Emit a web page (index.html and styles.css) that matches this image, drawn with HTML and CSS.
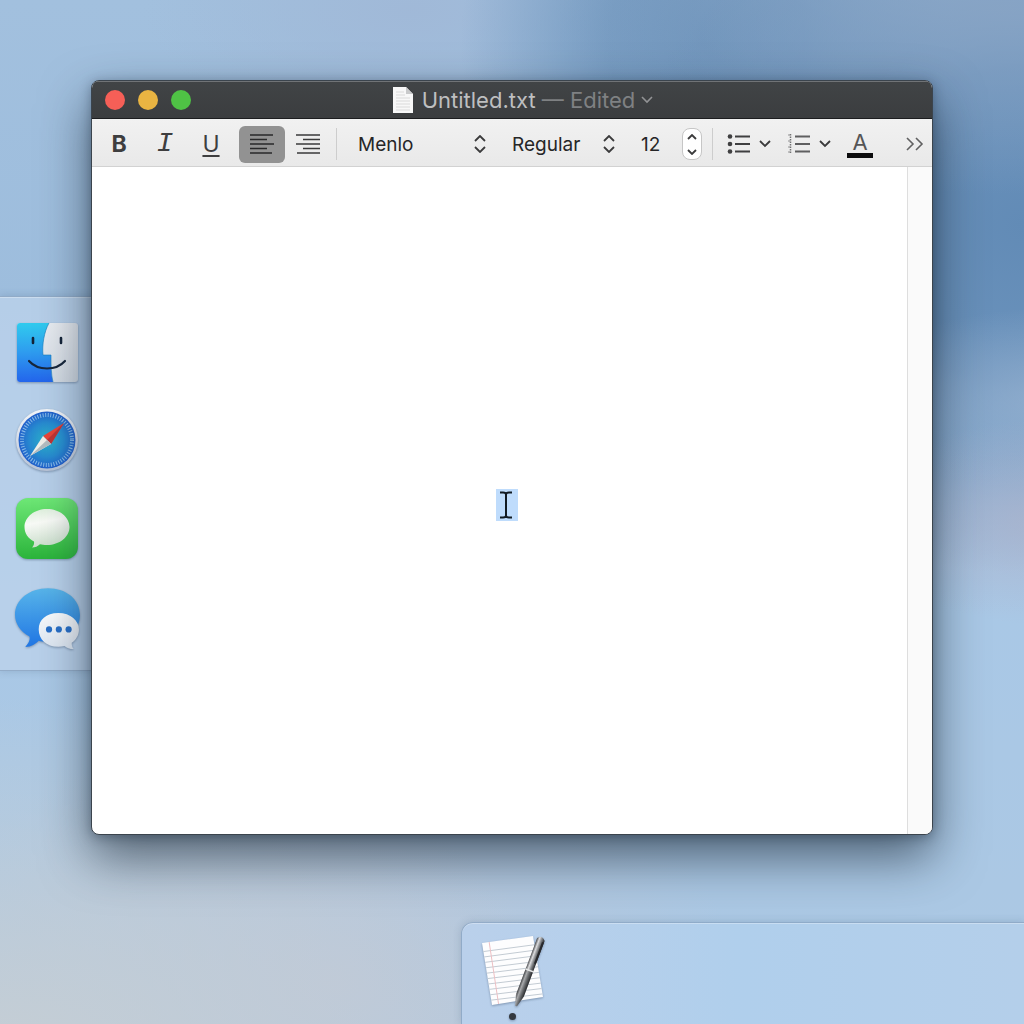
FILE: index.html
```html
<!DOCTYPE html>
<html lang="en">
<head>
<meta charset="utf-8">
<meta name="viewport" content="width=device-width, initial-scale=1">
<title>Untitled.txt</title>
<link rel="stylesheet" href="styles.css">
</head>
<body>
<main class="desktop">
  <nav class="dock dock-side" aria-label="Applications">
    <button class="app" type="button" aria-label="Finder">
      <svg viewBox="0 0 64 64" width="64" height="64">
        <defs>
          <linearGradient id="finder-blue" x1="0" y1="0" x2="0" y2="1"><stop offset="0" stop-color="#30cbee"/><stop offset=".5" stop-color="#2e9bef"/><stop offset="1" stop-color="#2365ec"/></linearGradient>
          <linearGradient id="finder-white" x1="0" y1="0" x2="1" y2="1"><stop offset="0" stop-color="#f3f4f7"/><stop offset="1" stop-color="#ccd5df"/></linearGradient>
        </defs>
        <rect x="2" y="3" width="61" height="59" rx="3" fill="url(#finder-white)"/>
        <path d="M34 3H5a3 3 0 0 0-3 3v53a3 3 0 0 0 3 3h33c-2-8-2-15-2-27h-8C27 25 29 12 34 3z" fill="url(#finder-blue)"/>
        <path d="M34 3C29 12 27 25 28 35h8c0 10 0 19 2 27" fill="none" stroke="#167bb9" stroke-width="1" opacity=".6"/>
        <path d="M18 18v5M46 18v5" stroke="#142338" stroke-width="2.600" stroke-linecap="round"/>
        <path d="M14 41c9 10 27 10 36 0" fill="none" stroke="#17263b" stroke-width="2.200" stroke-linecap="round"/>
      </svg>
    </button>
    <button class="app" type="button" aria-label="Safari">
      <svg viewBox="0 0 64 64" width="64" height="64">
        <defs>
          <radialGradient id="safari-blue"><stop offset="0" stop-color="#2bb3c9"/><stop offset=".6" stop-color="#278bd0"/><stop offset="1" stop-color="#2360cb"/></radialGradient>
          <linearGradient id="safari-ring" x1="0" y1="0" x2="0" y2="1"><stop offset="0" stop-color="#f2f5f9"/><stop offset="1" stop-color="#b9c4d6"/></linearGradient>
        </defs>
        <circle cx="32" cy="32" r="31" fill="url(#safari-ring)"/>
        <circle cx="32" cy="32" r="28.500" fill="url(#safari-blue)"/>
        <circle cx="32" cy="32" r="25" fill="none" stroke="#a4cff0" stroke-width="4" stroke-dasharray="1 1.618" opacity=".8"/>
        <path d="M49 15 28 28l8 8z" fill="#e84539"/>
        <path d="M49 15 32 32l4 4z" fill="#bd3536"/>
        <path d="M15 48 28 28l8 8z" fill="#f0efe9"/>
        <path d="M15 48 32 32l4 4z" fill="#b3bcc0"/>
      </svg>
    </button>
    <button class="app" type="button" aria-label="Messages">
      <svg viewBox="0 0 64 64" width="64" height="64">
        <defs>
          <linearGradient id="msg-green" x1="0" y1="0" x2="0" y2="1"><stop offset="0" stop-color="#6ee776"/><stop offset="1" stop-color="#2bb43b"/></linearGradient>
          <linearGradient id="msg-bubble" x1="0" y1="0" x2=".2" y2="1"><stop offset="0" stop-color="#d9eed8"/><stop offset=".4" stop-color="#f8faf6"/><stop offset="1" stop-color="#ccdfcd"/></linearGradient>
        </defs>
        <rect x="1" y="2" width="62" height="61" rx="12" fill="url(#msg-green)"/>
        <path d="M32 13c12.500 0 22.500 8 22.500 18S44.500 49 32 49c-3 0-5-.3-7-.8-2 2-5 3.300-8 3.300 1.500-1.500 2.500-4 2-6-6-3-9.500-8.500-9.500-14.500 0-10 10-18 22.500-18z" fill="url(#msg-bubble)"/>
      </svg>
    </button>
    <button class="app" type="button" aria-label="Chat">
      <svg viewBox="0 0 64 64" width="66" height="66">
        <defs>
          <linearGradient id="chat-blue" x1="0" y1="0" x2="0" y2="1"><stop offset="0" stop-color="#58b5ea"/><stop offset="1" stop-color="#2076e4"/></linearGradient>
          <linearGradient id="chat-white" x1="0" y1="0" x2="0" y2="1"><stop offset="0" stop-color="#fafbfd"/><stop offset="1" stop-color="#dbe5f1"/></linearGradient>
        </defs>
        <path d="M32 4c18 0 31 11 31 26S50 56 32 56c-4 0-7-.5-9-1-3 3-7 6-13 6 3-3 5-7 4-10C5 46 0 38 0 30 0 15 14 4 32 4z" fill="url(#chat-blue)"/>
        <path d="M42 28c12 0 20 7.500 20 16 0 6-3 10-7 13 0 2 0 4 2 6-4 0-7-1-9-3-2 .5-4 .8-6 .8-12 0-19-7.500-19-16.800S30 28 42 28z" fill="url(#chat-white)"/>
        <g fill="#286fc7"><circle cx="33" cy="44" r="3"/><circle cx="42.500" cy="44" r="3"/><circle cx="52" cy="44" r="3"/></g>
      </svg>
    </button>
  </nav>

  <nav class="dock dock-bottom" aria-label="Running applications">
    <button class="app running" type="button" aria-label="TextEdit">
      <svg viewBox="0 0 68 74" width="68" height="74">
        <defs>
          <linearGradient id="pen" x1="0" y1="0" x2="1" y2="0"><stop offset="0" stop-color="#4c4d50"/><stop offset=".3" stop-color="#dedee0"/><stop offset=".6" stop-color="#85878a"/><stop offset="1" stop-color="#252629"/></linearGradient>
          <clipPath id="sheet"><path d="M2 8 53 1 63 62 12 70z"/></clipPath>
        </defs>
        <path d="M2 8 53 1 63 62 12 70z" fill="#fdfdfe"/>
        <g clip-path="url(#sheet)" fill="none" stroke="#c3cbd3" stroke-width="1">
          <path d="M0 17l60-8M0 22.500l60-8M0 28l62-8M0 33.500l64-8M0 39l64-8M0 44.500l66-8M0 50l66-8M0 55.500l66-8M0 61l66-8M0 66.500l66-8"/>
          <path d="M9 6l10 66" stroke="#ecbfc3"/>
        </g>
        <g transform="translate(36 71) rotate(20.500)">
          <path d="M-1 0-4-12-4-36-4-71Q0-76 4-71L4-36 4-12 1 0z" fill="url(#pen)"/>
          <path d="M-4-38H4V-10L1 0h-2L-4-10z" fill="#303236" opacity=".3"/>
          <path d="M-4-38H4" stroke="#e4e5e6" stroke-width="1.500"/>
          <path d="M3-69V-46" stroke="#28292c" stroke-width="2"/>
        </g>
      </svg>
    </button>
  </nav>

  <section class="window" aria-label="Untitled.txt">
    <header class="titlebar">
      <div class="lights">
        <button class="light close" type="button" aria-label="Close"></button>
        <button class="light minimize" type="button" aria-label="Minimize"></button>
        <button class="light expand" type="button" aria-label="Zoom"></button>
      </div>
      <button class="title" type="button">
        <svg viewBox="0 0 20 26" width="20" height="26" aria-hidden="true">
          <path d="M0 0h13l7 7v19H0z" fill="#f8f8f8"/>
          <path d="M13 0v7h7z" fill="#c9cacb"/>
          <path d="M3 5h8M3 8h9M3 11h14M3 14h14M3 17h14M3 20h14M3 23h14" stroke="#dadada"/>
        </svg>
        <span class="title-name">Untitled.txt <span class="title-state">— Edited</span></span>
        <svg viewBox="0 0 14 10" width="14" height="10" aria-hidden="true"><path d="m2 2 5 5 5-5" fill="none" stroke="#929395" stroke-width="1.600"/></svg>
      </button>
    </header>

    <div class="toolbar" role="toolbar" aria-label="Formatting">
      <div class="group">
        <button class="tool bold" type="button" aria-label="Bold">B</button>
        <button class="tool italic" type="button" aria-label="Italic">I</button>
        <button class="tool underline" type="button" aria-label="Underline">U</button>
      </div>
      <div class="group">
        <button class="tool active" type="button" aria-label="Align left" aria-pressed="true">
          <svg viewBox="0 0 24 20" width="24" height="20"><path d="M0 1h23M0 5.500h17M0 10h24M0 14.500h17M0 19h22" stroke="#29292a" stroke-width="1.700"/></svg>
        </button>
        <button class="tool" type="button" aria-label="Align right">
          <svg viewBox="0 0 24 20" width="24" height="20"><path d="M0 1h24M7 5.500h17M0 10h24M7 14.500h17M1 19h23" stroke="#3a3a3b" stroke-width="1.700"/></svg>
        </button>
      </div>
      <span class="divider"></span>
      <label class="picker picker-font">
        <select aria-label="Font family"><option>Menlo</option></select>
        <svg viewBox="0 0 12 18" width="12" height="18"><path d="m1 6 5-5 5 5M1 12l5 5 5-5" fill="none" stroke="#3a3a3b" stroke-width="1.800"/></svg>
      </label>
      <label class="picker picker-style">
        <select aria-label="Typeface"><option>Regular</option></select>
        <svg viewBox="0 0 12 18" width="12" height="18"><path d="m1 6 5-5 5 5M1 12l5 5 5-5" fill="none" stroke="#3a3a3b" stroke-width="1.800"/></svg>
      </label>
      <input class="size" type="text" inputmode="numeric" value="12" aria-label="Font size">
      <div class="stepper">
        <button type="button" aria-label="Increase size"><svg viewBox="0 0 10 6" width="10" height="6"><path d="m1 5 4-4 4 4"/></svg></button>
        <button type="button" aria-label="Decrease size"><svg viewBox="0 0 10 6" width="10" height="6"><path d="m1 1 4 4 4-4"/></svg></button>
      </div>
      <span class="divider"></span>
      <div class="lists">
        <button class="menu" type="button" aria-label="Bulleted list">
          <svg viewBox="0 0 24 20" width="24" height="20"><g fill="#3f3f40"><circle cx="3" cy="2.500" r="2.300"/><circle cx="3" cy="10" r="2.300"/><circle cx="3" cy="17.500" r="2.300"/></g><path d="M8 2.500h15M8 10h15M8 17.500h15" stroke="#3f3f40" stroke-width="1.800"/></svg>
          <svg viewBox="0 0 12 8" width="12" height="8"><path class="chevron" d="m1 1 5 5 5-5"/></svg>
        </button>
        <button class="menu" type="button" aria-label="Numbered list">
          <svg viewBox="0 0 24 20" width="24" height="20"><path d="M3.500 0v20" stroke="#717172" stroke-width="1.500" stroke-dasharray="1.500 1"/><path d="M1 1h2M1 7h2M1 13h2M1 18h2" stroke="#929293"/><path d="M8 2.500h15M8 10h15M8 17.500h15" stroke="#5f5f60" stroke-width="1.800"/></svg>
          <svg viewBox="0 0 12 8" width="12" height="8"><path class="chevron" d="m1 1 5 5 5-5"/></svg>
        </button>
      </div>
      <button class="color" type="button" aria-label="Text color">A</button>
      <button class="more" type="button" aria-label="More tools">
        <svg viewBox="0 0 18 14" width="18" height="14"><path d="m1 1 6 6-6 6M10 1l6 6-6 6" fill="none" stroke="#606061" stroke-width="1.600"/></svg>
      </button>
    </div>

    <div class="document">
      <div class="page">
        <textarea aria-label="Document text" spellcheck="false"></textarea>
        <div class="pointer">
          <svg viewBox="0 0 14 28" width="14" height="28"><path d="M1 1.500h3q3 0 3 2 0-2 3-2h3M1 26.500h3q3 0 3-2 0 2 3 2h3M7 3v22" fill="none" stroke="#111a22" stroke-width="2"/></svg>
        </div>
      </div>
      <div class="gutter"></div>
    </div>
  </section>
</main>
</body>
</html>
```
FILE: styles.css
```css
* {
  box-sizing: border-box;
}

body {
  margin: 0;
  font-family: Inter, "Liberation Sans", sans-serif;
}

button,
input,
select,
textarea {
  margin: 0;
  padding: 0;
  border: 0;
  background: none;
  color: inherit;
  font: inherit;
}

svg {
  display: block;
  flex: none;
}

.desktop {
  position: relative;
  min-height: 100vh;
  overflow: hidden;
  background:
    radial-gradient(ellipse 18% 10% at 102% 51%, rgba(174, 179, 203, 0.75), rgba(174, 179, 203, 0)),
    radial-gradient(ellipse 22% 9% at 104% 39%, rgba(158, 183, 212, 0.7), rgba(158, 183, 212, 0)),
    radial-gradient(ellipse 44% 18% at 98% 1%, rgba(137, 164, 196, 0.8), rgba(137, 164, 196, 0)),
    radial-gradient(ellipse 40% 34% at 100% 22%, #628bb6, rgba(98, 139, 182, 0.85) 45%, rgba(98, 139, 182, 0)),
    radial-gradient(ellipse 24% 26% at 69% 4%, #6c93bb, rgba(108, 147, 187, 0.8) 40%, rgba(108, 147, 187, 0)),
    radial-gradient(ellipse 26% 12% at 40% 1%, rgba(160, 184, 215, 0.9), rgba(160, 184, 215, 0)),
    radial-gradient(ellipse 56% 36% at 0% 104%, #c6ced4, rgba(198, 206, 212, 0)),
    radial-gradient(ellipse 40% 26% at 32% 96%, rgba(190, 200, 216, 0.9), rgba(190, 200, 216, 0)),
    linear-gradient(#a2c0de, #9dbddd 30%, #a9c8e6 60%, #acc8e3);
}

.dock {
  position: absolute;
  display: flex;
  align-items: flex-start;
  border: 1px solid rgba(110, 135, 165, 0.5);
  box-shadow: 0 0 8px rgba(50, 75, 105, 0.2), inset 0 1px rgba(255, 255, 255, 0.3);
}

.dock-side {
  top: 296px;
  left: -1px;
  width: 112px;
  flex-direction: column;
  gap: 24px;
  padding: 23px 0 20px 15px;
  background: rgba(188, 210, 235, 0.8);
}

.dock-bottom {
  top: 922px;
  right: -1px;
  bottom: -1px;
  left: 461px;
  padding: 12px 18px;
  border-radius: 12px 0 0 0;
  background: linear-gradient(90deg, #bad0eb, #b0cfec 50%, #b4cfea);
}

.app {
  display: flex;
  flex-direction: column;
  align-items: center;
  filter: drop-shadow(0 1px 1px rgba(40, 60, 90, 0.4));
}

.app.running::after {
  content: "";
  width: 7px;
  height: 7px;
  margin: 4px 4px 0 0;
  border-radius: 50%;
  background: #34393f;
}

.window {
  position: absolute;
  top: 80px;
  right: 91px;
  bottom: 189px;
  left: 91px;
  display: flex;
  flex-direction: column;
  overflow: hidden;
  border: 1px solid #3b444d;
  border-radius: 8px;
  background: #fff;
  box-shadow: 0 22px 50px rgba(20, 32, 45, 0.62), 0 2px 12px rgba(20, 35, 55, 0.35);
}

.titlebar {
  display: grid;
  grid-template-columns: 1fr auto 1fr;
  align-items: center;
  height: 38px;
  padding-left: 13px;
  border-bottom: 1px solid #1c1d1f;
  background: linear-gradient(#414446, #3b3d3f);
  box-shadow: inset 0 1px #707376;
}

.lights {
  display: flex;
  gap: 13px;
}

.light {
  width: 20px;
  height: 20px;
  border-radius: 50%;
}

.close {
  background: #f65f57;
}

.minimize {
  background: #e9b442;
}

.expand {
  background: #4fc245;
}

.title {
  display: flex;
  align-items: center;
  gap: 9px;
  padding-left: 10px;
  color: #bebfc0;
  font-size: 22px;
  line-height: 28px;
}

.title-name {
  padding-top: 1px;
}

.title-name + svg {
  margin-left: -4px;
}

.title-state {
  color: #7f8183;
}

.toolbar {
  display: flex;
  align-items: center;
  height: 48px;
  padding: 3px 8px 0 4px;
  border-bottom: 1px solid #d2d2d2;
  background: linear-gradient(#f1f1f1, #e9e9e9);
  color: #3e3e3f;
}

.group {
  display: flex;
  margin-right: 5px;
}

.tool {
  display: grid;
  place-items: center;
  width: 46px;
  height: 37px;
  border-radius: 6px;
  font-size: 23px;
  line-height: 28px;
}

.bold {
  font-weight: 700;
}

.italic {
  font-family: "Liberation Mono", monospace;
  font-size: 28px;
  font-style: italic;
}

.underline {
  text-decoration: underline;
  text-decoration-thickness: 2px;
  text-underline-offset: 3px;
}

.active {
  background: #929292;
}

.divider {
  width: 1px;
  height: 32px;
  background: #cdcdcd;
}

.picker {
  display: grid;
  align-items: center;
  color: #262627;
  font-size: 19px;
}

.picker select,
.picker svg {
  grid-area: 1 / 1;
}

.picker select {
  height: 36px;
  appearance: none;
}

.picker svg {
  justify-self: end;
  pointer-events: none;
}

.picker-font {
  width: 128px;
  margin-left: 21px;
}

.picker-style {
  width: 103px;
  margin-left: 26px;
}

.size {
  width: 32px;
  margin-left: 26px;
  color: #262627;
  font-size: 19px;
}

.stepper {
  display: grid;
  width: 20px;
  height: 32px;
  margin: 0 10px 0 9px;
  border: 1px solid #c6c6c6;
  border-radius: 8px;
  background: #fff;
}

.stepper button {
  display: grid;
  place-items: center;
}

.stepper path,
.chevron {
  fill: none;
  stroke: #3a3a3b;
  stroke-width: 1.8;
}

.lists {
  display: flex;
  gap: 16px;
  margin-left: 14px;
}

.menu {
  display: flex;
  align-items: center;
  gap: 8px;
}

.color {
  width: 26px;
  margin-left: 16px;
  border-bottom: 5px solid #0c0c0d;
  color: #555556;
  font-size: 22px;
  line-height: 22px;
}

.more {
  margin-left: auto;
}

.document {
  display: flex;
  flex: 1;
  min-height: 0;
}

.page {
  position: relative;
  display: flex;
  flex: 1;
}

.page textarea {
  flex: 1;
  padding: 12px;
  outline: 0;
  resize: none;
  font-family: "DejaVu Sans Mono", monospace;
}

.pointer {
  position: absolute;
  top: 322px;
  left: 404px;
  display: grid;
  place-items: center;
  width: 22px;
  height: 32px;
  padding-right: 2px;
  background: #bfdcfc;
}

.gutter {
  width: 25px;
  border-left: 1px solid #dedede;
  background: #fafafa;
}
```
